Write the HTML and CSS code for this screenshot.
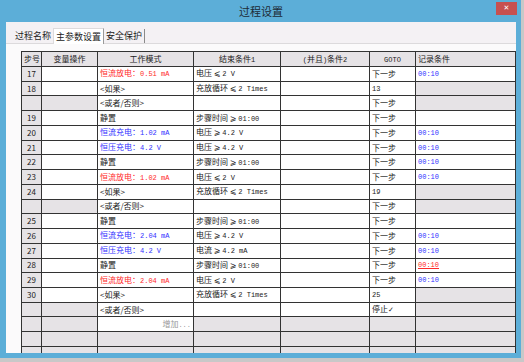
FILE: index.html
```html
<!DOCTYPE html>
<html>
<head>
    <title>过程设置</title>
    <link rel="stylesheet" href="styles.css">
</head>
<body>
    <div class="window">
        <div class="titlebar">
            <span class="title">过程设置</span>
            <span class="close">&#x2715;</span>
        </div>
        <div class="client">
            <div class="tabs">
                <span class="tab">过程名称</span>
                <span class="tab active">主参数设置</span>
                <span class="tab last">安全保护</span>
            </div>
            <div class="panel">
                <table class="steps">
                    <colgroup>
                        <col style="width:20px">
                        <col style="width:56px">
                        <col style="width:96px">
                        <col style="width:87px">
                        <col style="width:89px">
                        <col style="width:46px">
                        <col style="width:100px">
                    </colgroup>
                    <thead>
                        <tr>
                            <th>步号</th>
                            <th>变量操作</th>
                            <th>工作模式</th>
                            <th>结束条件<span class="v">1</span></th>
                            <th><span class="v">(</span>并且<span class="v">)</span>条件<span class="v">2</span></th>
                            <th><span class="v">GOTO</span></th>
                            <th class="left">记录条件</th>
                        </tr>
                    </thead>
                    <tbody>
                        <tr>
                            <td class="n">17</td><td></td>
                            <td class="red">恒流放电：<span class="v">0.51 mA</span></td>
                            <td>电压 <span class="op">⩽</span> <span class="v">2 V</span></td><td></td>
                            <td>下一步</td><td class="blue v">00:10</td>
                        </tr>
                        <tr>
                            <td class="n">18</td><td></td>
                            <td>&lt;如果&gt;</td>
                            <td>充放循环 <span class="op">⩽</span> <span class="v">2 Times</span></td><td></td>
                            <td class="v">13</td><td class="g"></td>
                        </tr>
                        <tr>
                            <td class="n"></td><td class="g"></td>
                            <td>&lt;或者/否则&gt;</td>
                            <td></td><td></td>
                            <td>下一步</td><td class="g"></td>
                        </tr>
                        <tr>
                            <td class="n">19</td><td></td>
                            <td>静置</td>
                            <td>步骤时间 <span class="op">⩾</span> <span class="v">01:00</span></td><td></td>
                            <td>下一步</td><td></td>
                        </tr>
                        <tr>
                            <td class="n">20</td><td></td>
                            <td class="blue">恒流充电：<span class="v">1.02 mA</span></td>
                            <td>电压 <span class="op">⩾</span> <span class="v">4.2 V</span></td><td></td>
                            <td>下一步</td><td class="blue v">00:10</td>
                        </tr>
                        <tr>
                            <td class="n">21</td><td></td>
                            <td class="blue">恒压充电：<span class="v">4.2 V</span></td>
                            <td>电压 <span class="op">⩾</span> <span class="v">4.2 V</span></td><td></td>
                            <td>下一步</td><td class="blue v">00:10</td>
                        </tr>
                        <tr>
                            <td class="n">22</td><td></td>
                            <td>静置</td>
                            <td>步骤时间 <span class="op">⩾</span> <span class="v">01:00</span></td><td></td>
                            <td>下一步</td><td class="blue v">00:10</td>
                        </tr>
                        <tr>
                            <td class="n">23</td><td></td>
                            <td class="red">恒流放电：<span class="v">1.02 mA</span></td>
                            <td>电压 <span class="op">⩽</span> <span class="v">2 V</span></td><td></td>
                            <td>下一步</td><td class="blue v">00:10</td>
                        </tr>
                        <tr>
                            <td class="n">24</td><td></td>
                            <td>&lt;如果&gt;</td>
                            <td>充放循环 <span class="op">⩽</span> <span class="v">2 Times</span></td><td></td>
                            <td class="v">19</td><td class="g"></td>
                        </tr>
                        <tr>
                            <td class="n"></td><td class="g"></td>
                            <td>&lt;或者/否则&gt;</td>
                            <td></td><td></td>
                            <td>下一步</td><td class="g"></td>
                        </tr>
                        <tr>
                            <td class="n">25</td><td></td>
                            <td>静置</td>
                            <td>步骤时间 <span class="op">⩾</span> <span class="v">01:00</span></td><td></td>
                            <td>下一步</td><td></td>
                        </tr>
                        <tr>
                            <td class="n">26</td><td></td>
                            <td class="blue">恒流充电：<span class="v">2.04 mA</span></td>
                            <td>电压 <span class="op">⩾</span> <span class="v">4.2 V</span></td><td></td>
                            <td>下一步</td><td class="blue v">00:10</td>
                        </tr>
                        <tr>
                            <td class="n">27</td><td></td>
                            <td class="blue">恒压充电：<span class="v">4.2 V</span></td>
                            <td>电流 <span class="op">⩾</span> <span class="v">4.2 mA</span></td><td></td>
                            <td>下一步</td><td class="blue v">00:10</td>
                        </tr>
                        <tr>
                            <td class="n">28</td><td></td>
                            <td>静置</td>
                            <td>步骤时间 <span class="op">⩾</span> <span class="v">01:00</span></td><td></td>
                            <td>下一步</td><td class="link v">00:10</td>
                        </tr>
                        <tr>
                            <td class="n">29</td><td></td>
                            <td class="red">恒流放电：<span class="v">2.04 mA</span></td>
                            <td>电压 <span class="op">⩽</span> <span class="v">2 V</span></td><td></td>
                            <td>下一步</td><td class="blue v">00:10</td>
                        </tr>
                        <tr>
                            <td class="n">30</td><td></td>
                            <td>&lt;如果&gt;</td>
                            <td>充放循环 <span class="op">⩽</span> <span class="v">2 Times</span></td><td></td>
                            <td class="v">25</td><td class="g"></td>
                        </tr>
                        <tr>
                            <td class="n"></td><td class="g"></td>
                            <td>&lt;或者/否则&gt;</td>
                            <td></td><td></td>
                            <td>停止<span class="check">✓</span></td><td class="g"></td>
                        </tr>
                        <tr>
                            <td class="n"></td><td class="g"></td>
                            <td class="add">增加<span class="v">...</span></td>
                            <td class="g"></td><td class="g"></td>
                            <td class="g"></td><td class="g"></td>
                        </tr>
                        <tr class="empty">
                            <td></td><td></td><td></td><td></td><td></td><td></td><td></td>
                        </tr>
                        <tr class="empty">
                            <td></td><td></td><td></td><td></td><td></td><td></td><td></td>
                        </tr>
                    </tbody>
                </table>
            </div>
        </div>
    </div>
</body>
</html>
```

FILE: styles.css
```css
*, ::after, ::before {
    box-sizing: border-box;
}

body {
    margin: 0;
    background: #c8c8c8;
    font-family: "Noto Sans CJK SC", sans-serif;
    color: #1a1a1a;
}

.window {
    width: 521px;
    height: 358px;
    background: #5caed8;
    padding: 0 5px 5px 6px;
    display: flex;
    flex-direction: column;
}

.titlebar {
    height: 22px;
    display: grid;
    grid-template-columns: 1fr auto 1fr;
    align-items: start;
}

.title {
    grid-column: 2;
    font-size: 11px;
    line-height: 22px;
    color: #1d2a35;
}

.close {
    grid-column: 3;
    justify-self: end;
    width: 21px;
    height: 13px;
    margin: 2px -1px 0 0;
    background: #c75050;
    color: #fff;
    font-family: "DejaVu Sans", sans-serif;
    font-size: 7px;
    font-weight: bold;
    line-height: 13px;
    text-align: center;
}

.client {
    flex: 1;
    display: flex;
    flex-direction: column;
    background: #f4f1f4;
    overflow: hidden;
}

.tabs {
    height: 22px;
    display: flex;
    align-items: flex-end;
    padding-left: 7px;
    border-bottom: 1px solid #dcdadc;
}

.tab {
    height: 14px;
    padding: 0 2px;
    font-size: 9px;
    line-height: 14px;
    color: #222;
    white-space: nowrap;
}

.tab.active {
    height: 16px;
    margin-bottom: -1px;
    background: #fff;
    border: 1px solid #dcdadc;
    border-bottom: none;
    border-right-color: #9a9a9a;
    line-height: 15px;
}

.tab.last {
    border-right: 1px solid #8a8a8a;
}

.panel {
    flex: 1;
    background: #fbfafb;
    padding: 7px 0 0 15px;
    overflow: hidden;
}

.steps {
    width: 494px;
    table-layout: fixed;
    border-collapse: collapse;
    font-size: 8px;
    background: #fff;
}

.steps th, .steps td {
    border: 1px solid #333;
    padding: 0 2px;
    white-space: nowrap;
    overflow: hidden;
    text-align: left;
    line-height: 12px;
}

.steps th {
    height: 15px;
    background: #e6e3e6;
    font-weight: normal;
    text-align: center;
}

.steps th.left {
    text-align: left;
}

.steps tbody tr {
    height: 14.74px;
}

.steps td.n {
    background: #e6e3e6;
    text-align: center;
}

.steps td.g,
.steps tr.empty td {
    background: #e6e3e6;
}

.v {
    font-family: "Liberation Mono", monospace;
    font-size: 7px;
}

td.v {
    font-size: 7px;
}

.op {
    font-family: "DejaVu Sans", sans-serif;
    font-size: 8px;
}

.check {
    font-family: "DejaVu Sans", sans-serif;
    font-size: 7px;
}

.red {
    color: #ff2a2a;
}

.blue {
    color: #3232ff;
}

.link {
    color: #ff2a2a;
    text-decoration: underline;
}

.steps td.add {
    text-align: right;
    color: #9a9a9a;
}
```
